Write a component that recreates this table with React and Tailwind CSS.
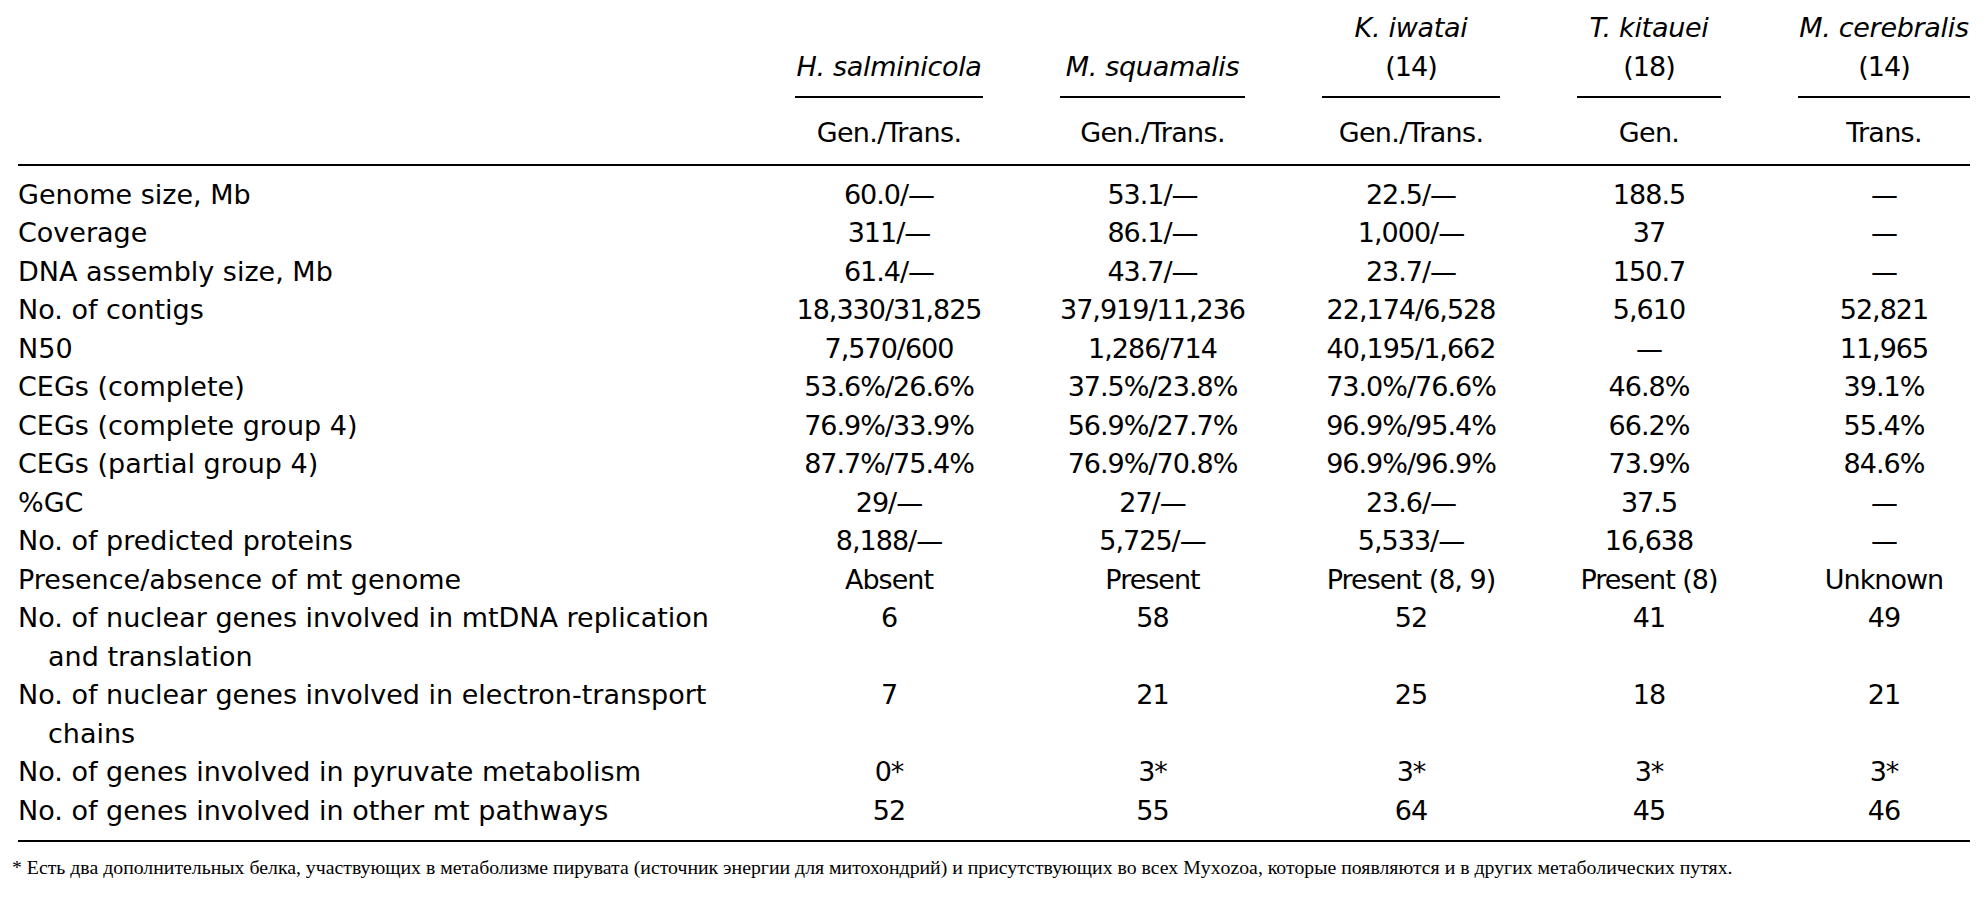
const grid = 'grid grid-cols-[700px_188px_185px_178px_144px_172px] gap-x-[77px]'

const species = [
  { name: 'H. salminicola' },
  { name: 'M. squamalis' },
  { name: 'K. iwatai', ref: '(14)' },
  { name: 'T. kitauei', ref: '(18)' },
  { name: 'M. cerebralis', ref: '(14)' },
]

const kinds = ['Gen./Trans.', 'Gen./Trans.', 'Gen./Trans.', 'Gen.', 'Trans.']

const rows = [
  { label: ['Genome size, Mb'], values: ['60.0/—', '53.1/—', '22.5/—', '188.5', '—'] },
  { label: ['Coverage'], values: ['311/—', '86.1/—', '1,000/—', '37', '—'] },
  { label: ['DNA assembly size, Mb'], values: ['61.4/—', '43.7/—', '23.7/—', '150.7', '—'] },
  { label: ['No. of contigs'], values: ['18,330/31,825', '37,919/11,236', '22,174/6,528', '5,610', '52,821'] },
  { label: ['N50'], values: ['7,570/600', '1,286/714', '40,195/1,662', '—', '11,965'] },
  { label: ['CEGs (complete)'], values: ['53.6%/26.6%', '37.5%/23.8%', '73.0%/76.6%', '46.8%', '39.1%'] },
  { label: ['CEGs (complete group 4)'], values: ['76.9%/33.9%', '56.9%/27.7%', '96.9%/95.4%', '66.2%', '55.4%'] },
  { label: ['CEGs (partial group 4)'], values: ['87.7%/75.4%', '76.9%/70.8%', '96.9%/96.9%', '73.9%', '84.6%'] },
  { label: ['%GC'], values: ['29/—', '27/—', '23.6/—', '37.5', '—'] },
  { label: ['No. of predicted proteins'], values: ['8,188/—', '5,725/—', '5,533/—', '16,638', '—'] },
  { label: ['Presence/absence of mt genome'], values: ['Absent', 'Present', 'Present (8, 9)', 'Present (8)', 'Unknown'] },
  {
    label: ['No. of nuclear genes involved in mtDNA replication', 'and translation'],
    values: ['6', '58', '52', '41', '49'],
  },
  {
    label: ['No. of nuclear genes involved in electron-transport', 'chains'],
    values: ['7', '21', '25', '18', '21'],
  },
  { label: ['No. of genes involved in pyruvate metabolism'], values: ['0*', '3*', '3*', '3*', '3*'] },
  { label: ['No. of genes involved in other mt pathways'], values: ['52', '55', '64', '45', '46'] },
]

function Value({ children }) {
  return <div className="flex justify-center whitespace-nowrap tracking-[-1px]">{children}</div>
}

export default function App() {
  return (
    <div className="w-[1988px] h-[898px] overflow-hidden bg-white text-black font-['DejaVu_Sans',sans-serif] text-[27px] leading-[38.5px]">
      <div className="ml-[18px] w-[1952px] pt-[9px]">
        {/* species header */}
        <div className={`${grid} items-end`}>
          <div />
          {species.map((s) => (
            <div key={s.name} className="flex flex-col items-center border-b-2 border-black pb-[10px] whitespace-nowrap">
              <span className="italic tracking-[-0.3px]">{s.name}</span>
              {s.ref ? <span className="tracking-[-1px]">{s.ref}</span> : null}
            </div>
          ))}
        </div>

        <div className={`${grid} mt-[16px]`}>
          <div />
          {kinds.map((k, i) => (
            <div key={i} className="flex justify-center whitespace-nowrap tracking-[-0.7px]">
              {k}
            </div>
          ))}
        </div>

        <div className="mt-[11px] h-[2px] bg-black" />

        <div className="mt-[10px]">
          {rows.map((r) => (
            <div key={r.label[0]} className={grid}>
              <div>
                <div className="whitespace-nowrap">{r.label[0]}</div>
                {r.label[1] ? <div className="pl-[30px] whitespace-nowrap">{r.label[1]}</div> : null}
              </div>
              {r.values.map((v, i) => (
                <Value key={i}>{v}</Value>
              ))}
            </div>
          ))}
        </div>

        <div className="mt-[10px] h-[2px] bg-black" />
      </div>

      <p className="mt-[14px] pl-[12px] font-['Liberation_Serif',serif] text-[19.8px] leading-[22px] whitespace-nowrap">
        * Есть два дополнительных белка, участвующих в метаболизме пирувата (источник энергии для митохондрий) и присутствующих во всех Myxozoa, которые появляются и в других метаболических путях.
      </p>
    </div>
  )
}
